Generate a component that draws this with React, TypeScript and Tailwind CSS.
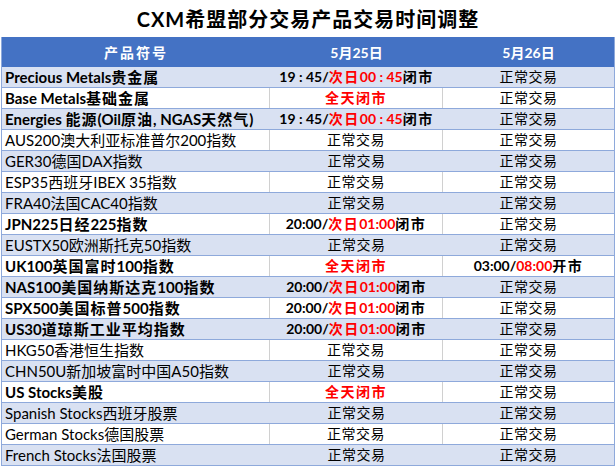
import React from "react";

type Seg = { t: string; red?: boolean };
type Row = { name: string; bold: boolean; c2: Seg[] | string; c3: Seg[] | string };

const N = "正常交易";
const close1945: Seg[] = [{ t: "19 : 45/" }, { t: "次日00 : 45", red: true }, { t: "闭市" }];
const close2000: Seg[] = [{ t: "20:00/" }, { t: "次日01:00", red: true }, { t: "闭市" }];
const allDay: Seg[] = [{ t: "全天闭市", red: true }];
const open0300: Seg[] = [{ t: "03:00/" }, { t: "08:00", red: true }, { t: "开市" }];

const rows: Row[] = [
  { name: "Precious Metals贵金属", bold: true, c2: close1945, c3: N },
  { name: "Base Metals基础金属", bold: true, c2: allDay, c3: N },
  { name: "Energies 能源(Oil原油, NGAS天然气)", bold: true, c2: close1945, c3: N },
  { name: "AUS200澳大利亚标准普尔200指数", bold: false, c2: N, c3: N },
  { name: "GER30德国DAX指数", bold: false, c2: N, c3: N },
  { name: "ESP35西班牙IBEX 35指数", bold: false, c2: N, c3: N },
  { name: "FRA40法国CAC40指数", bold: false, c2: N, c3: N },
  { name: "JPN225日经225指数", bold: true, c2: close2000, c3: N },
  { name: "EUSTX50欧洲斯托克50指数", bold: false, c2: N, c3: N },
  { name: "UK100英国富时100指数", bold: true, c2: allDay, c3: open0300 },
  { name: "NAS100美国纳斯达克100指数", bold: true, c2: close2000, c3: N },
  { name: "SPX500美国标普500指数", bold: true, c2: close2000, c3: N },
  { name: "US30道琼斯工业平均指数", bold: true, c2: close2000, c3: N },
  { name: "HKG50香港恒生指数", bold: false, c2: N, c3: N },
  { name: "CHN50U新加坡富时中国A50指数", bold: false, c2: N, c3: N },
  { name: "US Stocks美股", bold: true, c2: allDay, c3: N },
  { name: "Spanish Stocks西班牙股票", bold: false, c2: N, c3: N },
  { name: "German Stocks德国股票", bold: false, c2: N, c3: N },
  { name: "French Stocks法国股票", bold: false, c2: N, c3: N },
];

const font = { fontFamily: '"Lato", "Noto Sans CJK SC", sans-serif' };

function Mixed({ text, cjkClass }: { text: string; cjkClass: string }) {
  const parts = text.split(/([\u4e00-\u9fff\uff00-\uffef]+)/).filter((p) => p.length > 0);
  return (
    <>
      {parts.map((p, i) =>
        /[\u4e00-\u9fff\uff00-\uffef]/.test(p) ? (
          <span key={i} className={cjkClass}>
            {p}
          </span>
        ) : (
          <span key={i}>{p}</span>
        )
      )}
    </>
  );
}

function Cell({ v }: { v: Seg[] | string }) {
  if (typeof v === "string") {
    return <span className="font-normal tracking-[0.5px]">{v}</span>;
  }
  return (
    <span className="font-bold">
      {v.map((s, i) => (
        <span key={i} className={s.red ? "text-[#FF0000]" : "text-black"}>
          <Mixed text={s.t} cjkClass="tracking-[1.5px]" />
        </span>
      ))}
    </span>
  );
}

export default function App() {
  return (
    <div className="w-[616px] h-[468px] bg-white overflow-hidden text-black" style={font}>
      <div className="h-[37px] flex items-center justify-center text-[20px] font-bold tracking-[1px]">
        CXM希盟部分交易产品交易时间调整
      </div>
      <div className="mx-[1px] border-l border-r border-[#8EA9DB]">
        <div className="h-[30px] bg-[#4472C4] grid grid-cols-[268px_173px_1fr] items-center text-white font-bold text-[14px]">
          <div className="text-center tracking-[2px]">产品符号</div>
          <div className="text-center">5月25日</div>
          <div className="text-center">5月26日</div>
        </div>
        {rows.map((r, i) => {
          const band = i % 2 === 0;
          return (
            <div
              key={i}
              className={
                "h-[21px] border-b border-[#8EA9DB] grid grid-cols-[268px_173px_1fr] text-[14px] leading-[20px] " +
                (band ? "bg-[#D9E1F2]" : "bg-white")
              }
            >
              <div
                className={
                  "pl-[3px] whitespace-nowrap overflow-visible " +
                  (r.bold ? "font-bold text-[15px]" : "font-normal text-[15px]") +
                  (band ? "" : " border-r border-[#D0D0D0]")
                }
              >
                {r.bold ? <Mixed text={r.name} cjkClass="text-[15px] tracking-[1px]" /> : r.name}
              </div>
              <div className={"text-center whitespace-nowrap" + (band ? "" : " border-r border-[#D0D0D0]")}>
                <Cell v={r.c2} />
              </div>
              <div className="text-center whitespace-nowrap">
                <Cell v={r.c3} />
              </div>
            </div>
          );
        })}
      </div>
    </div>
  );
}
